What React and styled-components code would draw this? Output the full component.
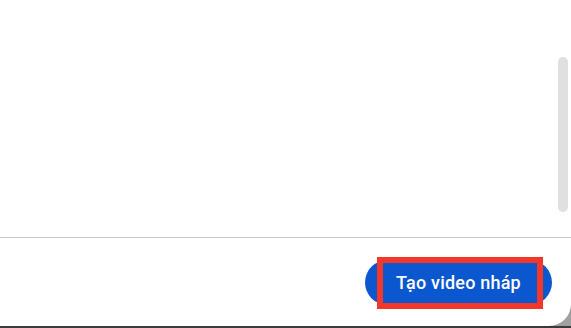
import React from 'react';
import styled, { createGlobalStyle } from 'styled-components';

const GlobalStyle = createGlobalStyle`
  html, body {
    margin: 0;
    padding: 0;
    background: #a0a0a0;
    overflow: hidden;
  }
  body {
    font-family: Roboto, "Noto Sans", Arial, sans-serif;
  }
`;

const Screen = styled.div`
  width: 571px;
  height: 328px;
  display: flex;
  flex-direction: column;
  background: #a0a0a0;
`;

const Panel = styled.div`
  height: 326px;
  background: #ffffff;
  border-bottom-right-radius: 22px;
  display: flex;
  flex-direction: column;
  overflow: hidden;
`;

const BottomEdge = styled.div`
  height: 2px;
  background: #3a3a3a;
`;

const ScrollArea = styled.div`
  position: relative;
  height: 237px;
  border-bottom: 1px solid #c6c6c6;
`;

// thanh cuộn vẽ tay, vì trình duyệt headless ẩn scrollbar
const ScrollThumb = styled.div`
  position: absolute;
  right: 3px;
  top: 57px;
  width: 10px;
  height: 155px;
  border-radius: 5px;
  background: #dfe0df;
`;

const Footer = styled.div`
  flex: 1;
  display: flex;
  align-items: center;
  justify-content: flex-end;
  padding-right: 19px;
`;

const ButtonWrap = styled.div`
  position: relative;
`;

const PrimaryButton = styled.button`
  height: 45px;
  width: 187px;
  border: none;
  border-radius: 23px;
  background: #0b57d0;
  color: #ffffff;
  font-family: Roboto, "Noto Sans", Arial, sans-serif;
  font-size: 18px;
  font-weight: 500;
  letter-spacing: 0.2px;
  padding: 0;
  cursor: pointer;
`;

const Highlight = styled.div`
  position: absolute;
  left: 12px;
  right: 9px;
  top: -3px;
  bottom: -4px;
  border: 6px solid #f3382a;
  pointer-events: none;
`;

export default function App() {
  return (
    <>
      <GlobalStyle />
      <Screen>
        <Panel>
          <ScrollArea>
            <ScrollThumb />
          </ScrollArea>
          <Footer>
            <ButtonWrap>
              <PrimaryButton>Tạo video nháp</PrimaryButton>
              <Highlight />
            </ButtonWrap>
          </Footer>
        </Panel>
        <BottomEdge />
      </Screen>
    </>
  );
}
